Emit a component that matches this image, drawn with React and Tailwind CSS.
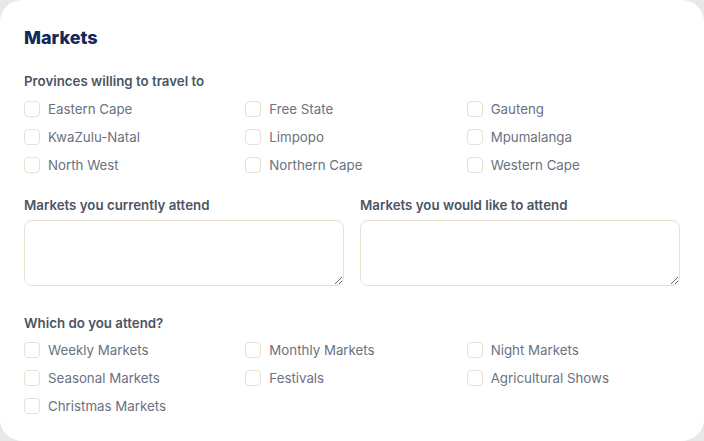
import React from "react";

const provinces = [
  "Eastern Cape", "Free State", "Gauteng",
  "KwaZulu-Natal", "Limpopo", "Mpumalanga",
  "North West", "Northern Cape", "Western Cape",
];

const kinds = [
  "Weekly Markets", "Monthly Markets", "Night Markets",
  "Seasonal Markets", "Festivals", "Agricultural Shows",
  "Christmas Markets",
];

function Check({ label }) {
  return (
    <label className="flex h-5 items-center gap-2">
      <span className="h-4 w-4 shrink-0 rounded-[4px] border border-[#e8e1d1] bg-white" />
      <span className="text-[13.3px] leading-5 text-[#6b7280]">{label}</span>
    </label>
  );
}

export default function App() {
  return (
    <div className="h-[441px] w-[704px] bg-[#e8e8e8]" style={{ fontFamily: "Inter, 'Noto Sans', sans-serif" }}>
      <div className="h-full w-full rounded-[22px] bg-white px-6 pt-6">
        <h2 className="text-[18px] font-extrabold leading-7 text-[#14285a]">
          Markets
        </h2>
        <div className="mt-[19px] text-[13.3px] font-semibold leading-5 text-[#4b5563]">
          Provinces willing to travel to
        </div>
        <div className="mt-2 grid grid-cols-3 gap-x-2 gap-y-2">
          {provinces.map((p) => (
            <Check key={p} label={p} />
          ))}
        </div>
        <div className="mt-5 grid grid-cols-2 gap-x-4">
          <div>
            <div className="text-[13.3px] font-semibold leading-5 text-[#4b5563]">Markets you currently attend</div>
            <textarea className="mt-[5px] block h-[66px] w-full rounded-lg border border-[#e8e1d1] bg-white outline-none" />
          </div>
          <div>
            <div className="text-[13.3px] font-semibold leading-5 text-[#4b5563]">Markets you would like to attend</div>
            <textarea className="mt-[5px] block h-[66px] w-full rounded-lg border border-[#e8e1d1] bg-white outline-none" />
          </div>
        </div>
        <div className="mt-[27px] text-[13.3px] font-semibold leading-5 text-[#4b5563]">Which do you attend?</div>
        <div className="mt-[7px] grid grid-cols-3 gap-x-2 gap-y-2">
          {kinds.map((p) => (
            <Check key={p} label={p} />
          ))}
        </div>
      </div>
    </div>
  );
}
